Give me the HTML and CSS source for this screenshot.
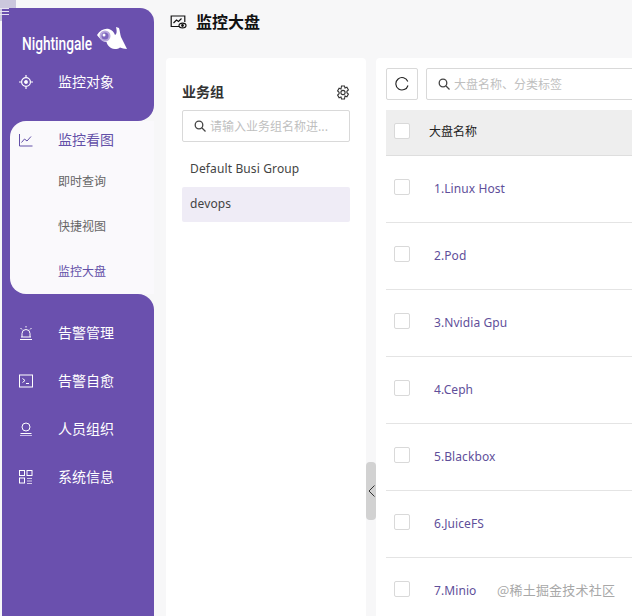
FILE: index.html
```html
<!DOCTYPE html>
<html lang="zh">
<head>
<meta charset="utf-8">
<title>监控大盘</title>
<link rel="stylesheet" href="styles.css">
</head>
<body>
<div class="menu-bg"></div>
<div class="app">
  <aside class="sidebar">
    <div class="nav-top">
      <div class="logo">
        <span class="logo-text"><span class="logo-word">Nightingale</span></span>
        <svg class="logo-bird" width="30" height="23" viewBox="0 0 30 23">
          <path fill="#fff" d="M0 8 C3 3 8 1 12 2 C15 3 17 5 18 8 C20 7 20 4 19 0 L22 1 C23 4 23 7 24 10 C26 14 28 18 30 22 C27 22 25 21 23 20.500 C21 22 17 23 14 21 C11 19 10 17 9.500 15 C6 15 3 12 0 8Z"/>
          <circle cx="8" cy="9" r="5.500" fill="#b9a8dd"/>
          <circle cx="8" cy="9" r="3.500" fill="#7e66be"/>
          <circle cx="7" cy="8" r="1.500" fill="#fff"/>
        </svg>
      </div>
      <a class="nav-item">
        <svg class="nav-icon" width="14" height="14" viewBox="0 0 14 14" fill="none" stroke="#fff" stroke-width="1.2"><circle cx="7" cy="7" r="4.4"/><circle cx="7" cy="7" r="1.3" fill="#fff"/><path d="M7 0v2.2M7 11.8V14M0 7h2.2M11.8 7H14"/></svg>
        <span>监控对象</span>
      </a>
    </div>
    <div class="nav-active-wrap">
      <div class="nav-active">
        <a class="nav-item nav-head">
          <svg class="nav-icon" width="14" height="14" viewBox="0 0 14 14" fill="none" stroke="#6350a8" stroke-width="1"><path d="M.5 1v12h13"/><path d="M2.5 9.5l3-3.5 2.5 2 4-4.5"/></svg>
          <span>监控看图</span>
        </a>
        <a class="nav-sub">即时查询</a>
        <a class="nav-sub">快捷视图</a>
        <a class="nav-sub nav-sub-current">监控大盘</a>
      </div>
    </div>
    <div class="nav-bottom">
      <a class="nav-item">
        <svg class="nav-icon" width="14" height="14" viewBox="0 0 14 14" fill="none" stroke="#fff" stroke-width="1"><path d="M3 11V7.5a4 4 0 0 1 8 0V11"/><path d="M1 13.500h12M2 11h10"/><path d="M1.500 2l1.500 1.500M12.500 2L11 3.500M7 0v1.500"/></svg>
        <span>告警管理</span>
      </a>
      <a class="nav-item">
        <svg class="nav-icon" width="14" height="14" viewBox="0 0 14 14" fill="none" stroke="#fff" stroke-width="1"><rect x=".5" y="1" width="13" height="12"/><path d="M3.500 4.500l2.500 2-2.500 2M7 9.500h3"/></svg>
        <span>告警自愈</span>
      </a>
      <a class="nav-item">
        <svg class="nav-icon" width="14" height="14" viewBox="0 0 14 14" fill="none" stroke="#fff" stroke-width="1"><circle cx="7" cy="5" r="4"/><path d="M1.500 11.500h11"/><path d="M1 13.500h12" stroke="#c9bce6"/></svg>
        <span>人员组织</span>
      </a>
      <a class="nav-item">
        <svg class="nav-icon" width="14" height="14" viewBox="0 0 14 14" fill="none" stroke="#fff" stroke-width="1"><rect x=".5" y=".5" width="5" height="5"/><rect x="8" y=".5" width="5" height="5"/><rect x=".5" y="8" width="5" height="5"/><path d="M8 8.500h5M8 11h5M8 13.500h5" stroke="#d5cbe9"/></svg>
        <span>系统信息</span>
      </a>
    </div>
  </aside>

  <main class="main">
    <header class="page-head">
      <svg width="17" height="14" viewBox="0 0 17 14" fill="none" stroke="#111" stroke-width="1.200"><path d="M9 11.500H1.200V1h13.600v6"/><path d="M3.500 8l3-3 2 1.500 3-3"/><ellipse cx="12.500" cy="10.500" rx="3.500" ry="2.400"/><circle cx="12.500" cy="10.500" r=".8" fill="#111"/></svg>
      <h1>监控大盘</h1>
    </header>
    <div class="content">
      <section class="groups">
        <div class="groups-head">
          <span class="groups-title">业务组</span>
          <svg width="14" height="15" viewBox="0 0 14 15" fill="none" stroke="#333" stroke-width="1.100"><path d="M5.500 1h3l.5 2 1.900-.7 1.500 2.600-1.500 1.400v1.400l1.500 1.400-1.500 2.600L9 11l-.5 3h-3L5 11.900 3.100 12.700 1.600 10.100l1.500-1.400V7.300L1.600 5.900l1.500-2.600L5 4z"/><circle cx="7" cy="7.500" r="2.100"/></svg>
        </div>
        <label class="search group-search">
          <svg class="search-icon" width="12" height="12" viewBox="0 0 12 12" fill="none" stroke="#444" stroke-width="1.300"><circle cx="5" cy="5" r="3.800"/><path d="M8 8l3.500 3.500"/></svg>
          <span>请输入业务组名称进...</span>
        </label>
        <ul class="group-list">
          <li class="group-item">Default Busi Group</li>
          <li class="group-item group-current">devops</li>
        </ul>
      </section>
      <div class="splitter">
        <button class="splitter-handle" type="button">
          <svg width="7" height="12" viewBox="0 0 7 12" fill="none" stroke="#333" stroke-width="1"><path d="M6.500.5L1 6l5.500 5.500"/></svg>
        </button>
      </div>
      <section class="boards">
        <div class="toolbar">
          <button class="refresh" type="button">
            <svg width="14" height="14" viewBox="0 0 14 14" fill="none" stroke="#222" stroke-width="1.100"><path d="M12.800 4.500A6.200 6.200 0 1 0 13 8.500"/></svg>
          </button>
          <label class="search board-search">
            <svg class="search-icon" width="12" height="12" viewBox="0 0 12 12" fill="none" stroke="#444" stroke-width="1.300"><circle cx="5" cy="5" r="3.800"/><path d="M8 8l3.500 3.500"/></svg>
            <span>大盘名称、分类标签</span>
          </label>
        </div>
        <div class="table">
          <div class="thead"><span class="check"></span><span class="th-name">大盘名称</span></div>
          <div class="row"><span class="check"></span><a class="board-link">1.Linux Host</a></div>
          <div class="row"><span class="check"></span><a class="board-link">2.Pod</a></div>
          <div class="row"><span class="check"></span><a class="board-link">3.Nvidia Gpu</a></div>
          <div class="row"><span class="check"></span><a class="board-link">4.Ceph</a></div>
          <div class="row"><span class="check"></span><a class="board-link">5.Blackbox</a></div>
          <div class="row"><span class="check"></span><a class="board-link">6.JuiceFS</a></div>
          <div class="row"><span class="check"></span><a class="board-link">7.Minio</a></div>
        </div>
      </section>
    </div>
  </main>
</div>
<div class="menu-toggle"><span></span><span></span><span></span></div>
<div class="watermark">@稀土掘金技术社区</div>
</body>
</html>
```

FILE: styles.css
```css
* { box-sizing: border-box; }
html, body { margin: 0; height: 100%; overflow: hidden; }
body {
  background: #f7f7f8;
  color: #333;
  font-family: "Noto Sans CJK SC", "Noto Sans", sans-serif;
  font-size: 12px;
}
a { display: block; }

.menu-bg {
  position: absolute;
  left: 0;
  top: 0;
  width: 16px;
  height: 21px;
  background: #cbc7dd;
}
.menu-toggle {
  position: absolute;
  left: 0;
  top: 0;
  width: 9px;
  padding-top: 8px;
}
.menu-toggle span {
  display: block;
  height: 1px;
  margin-bottom: 2px;
  background: #e6e2f2;
}

.app { position: relative; display: flex; height: 616px; width: 632px; padding-left: 2px; }

.sidebar { width: 152px; flex: none; margin-top: 8px; display: flex; flex-direction: column; }
.nav-top {
  height: 113px;
  background: #6a50ae;
  border-radius: 0 14px 16px 0;
}
.logo { display: flex; align-items: flex-start; height: 50px; padding: 20px 0 0 20px; }
.logo-text { display: block; width: 75px; flex: none; margin-top: 6px; }
.logo-word {
  display: inline-block;
  color: #fff;
  font-family: "Roboto", "Liberation Sans", sans-serif;
  font-size: 18px;
  font-weight: 500;
  line-height: 19px;
  white-space: nowrap;
  transform: scaleX(.76);
  transform-origin: left center;
}
.logo-bird { margin-top: -1px; }
.nav-item {
  display: flex;
  align-items: center;
  height: 48px;
  padding-left: 17px;
  color: #fff;
  font-size: 14px;
}
.nav-item span { margin-top: -2px; }
.nav-icon { flex: none; margin-right: 25px; }
.nav-active-wrap {
  height: 173px;
  padding-left: 8px;
  background: linear-gradient(90deg, #6a50ae 50%, #f7f7f8 50%);
}
.nav-active { height: 100%; background: #faf9fc; border-radius: 16px 0 0 16px; }
.nav-head { height: 38px; padding-left: 9px; color: #6350a8; }
.nav-sub { height: 45px; line-height: 43px; padding-left: 48px; font-size: 12px; color: #666; }
.nav-sub-current { color: #6350a8; }
.nav-bottom {
  flex: 1;
  padding-top: 15px;
  background: #6a50ae;
  border-top-right-radius: 16px;
}

.main { flex: 1; padding: 0 0 0 12px; min-width: 0; overflow: hidden; }
.page-head { display: flex; align-items: center; gap: 9px; height: 58px; padding: 0 0 14px 4px; }
.page-head h1 { margin: -2px 0 0; font-size: 16px; font-weight: 700; color: #111; line-height: 1; }

.content { display: flex; height: 558px; }
.groups { width: 200px; flex: none; background: #fff; border-radius: 4px 4px 0 0; padding: 24px 16px 0; }
.groups-head { display: flex; align-items: center; justify-content: space-between; height: 20px; margin-bottom: 8px; }
.groups-title { margin-top: -2px; font-size: 14px; font-weight: 700; color: #333; }
.search {
  display: flex;
  align-items: center;
  background: #fff;
  border: 1px solid #d9d9d9;
  border-radius: 2px;
  color: #bfbfbf;
  font-size: 12px;
}
.search span { margin-top: -2px; }
.group-search { height: 32px; padding-left: 11px; gap: 4px; }
.group-list { list-style: none; margin: 9px 0 0; padding: 0; }
.group-item { height: 36px; line-height: 36px; padding-left: 8px; font-family: "Noto Sans", sans-serif; font-size: 12px; letter-spacing: .13px; color: #444; }
.group-current { height: 35px; line-height: 33px; background: #efecf6; border-radius: 2px; }

.splitter { width: 10px; flex: none; padding-top: 404px; }
.splitter-handle {
  display: flex;
  align-items: center;
  justify-content: center;
  width: 10px;
  height: 58px;
  padding: 0;
  border: 0;
  border-radius: 4px;
  background: #d2d2d2;
}

.boards { flex: none; width: 500px; background: #fff; padding: 10px; border-radius: 4px 0 0 0; }
.toolbar { display: flex; gap: 8px; height: 32px; margin-bottom: 10px; }
.refresh {
  display: flex;
  align-items: center;
  justify-content: center;
  width: 32px;
  height: 32px;
  padding: 0;
  background: #fff;
  border: 1px solid #d9d9d9;
  border-radius: 2px;
}
.board-search { flex: 1; height: 32px; padding-left: 11px; gap: 4px; }

.thead {
  display: flex;
  align-items: flex-start;
  height: 46px;
  padding: 13px 0 0 8px;
  background: #eeeeee;
  border-bottom: 1px solid #dedede;
}
.th-name { margin-left: 19px; font-size: 12px; line-height: 16px; color: #222; }
.check {
  flex: none;
  width: 16px;
  height: 16px;
  background: #fff;
  border: 1px solid #d9d9d9;
  border-radius: 2px;
}
.row {
  display: flex;
  align-items: flex-start;
  height: 67px;
  padding: 23px 0 0 8px;
  border-bottom: 1px solid #e4e4e4;
}
.board-link {
  margin: 1px 0 0 24px;
  font-family: "Noto Sans", sans-serif;
  font-size: 12px;
  line-height: 18px;
  letter-spacing: .08px;
  color: #5f4f9a;
}

.watermark {
  position: absolute;
  left: 497px;
  top: 580px;
  color: #a8a8a8;
  font-size: 13px;
  line-height: 20px;
  letter-spacing: .2px;
}
```
